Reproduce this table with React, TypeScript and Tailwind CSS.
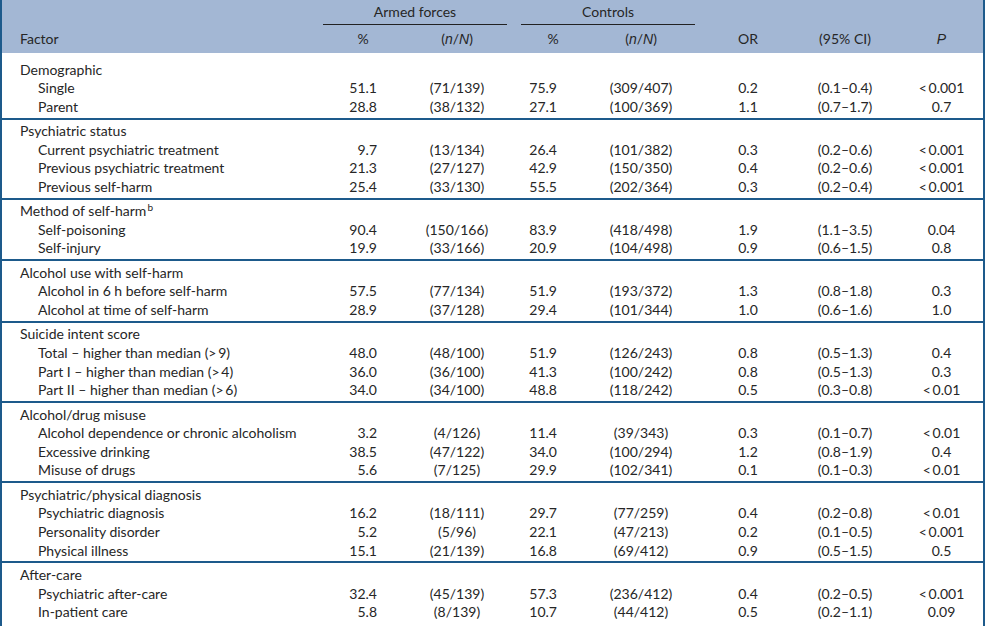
import React from 'react';

type Row = [string, string, string, string, string, string, string, string];
type Section = { title: string; sup?: string; rows: Row[] };

const sections: Section[] = [
  {
    title: 'Demographic',
    rows: [
      ['Single', '51.1', '(71/139)', '75.9', '(309/407)', '0.2', '(0.1–0.4)', '<\u20090.001'],
      ['Parent', '28.8', '(38/132)', '27.1', '(100/369)', '1.1', '(0.7–1.7)', '0.7'],
    ],
  },
  {
    title: 'Psychiatric status',
    rows: [
      ['Current psychiatric treatment', '9.7', '(13/134)', '26.4', '(101/382)', '0.3', '(0.2–0.6)', '<\u20090.001'],
      ['Previous psychiatric treatment', '21.3', '(27/127)', '42.9', '(150/350)', '0.4', '(0.2–0.6)', '<\u20090.001'],
      ['Previous self-harm', '25.4', '(33/130)', '55.5', '(202/364)', '0.3', '(0.2–0.4)', '<\u20090.001'],
    ],
  },
  {
    title: 'Method of self-harm',
    sup: 'b',
    rows: [
      ['Self-poisoning', '90.4', '(150/166)', '83.9', '(418/498)', '1.9', '(1.1–3.5)', '0.04'],
      ['Self-injury', '19.9', '(33/166)', '20.9', '(104/498)', '0.9', '(0.6–1.5)', '0.8'],
    ],
  },
  {
    title: 'Alcohol use with self-harm',
    rows: [
      ['Alcohol in 6 h before self-harm', '57.5', '(77/134)', '51.9', '(193/372)', '1.3', '(0.8–1.8)', '0.3'],
      ['Alcohol at time of self-harm', '28.9', '(37/128)', '29.4', '(101/344)', '1.0', '(0.6–1.6)', '1.0'],
    ],
  },
  {
    title: 'Suicide intent score',
    rows: [
      ['Total – higher than median (>\u20099)', '48.0', '(48/100)', '51.9', '(126/243)', '0.8', '(0.5–1.3)', '0.4'],
      ['Part I – higher than median (>\u20094)', '36.0', '(36/100)', '41.3', '(100/242)', '0.8', '(0.5–1.3)', '0.3'],
      ['Part II – higher than median (>\u20096)', '34.0', '(34/100)', '48.8', '(118/242)', '0.5', '(0.3–0.8)', '<\u20090.01'],
    ],
  },
  {
    title: 'Alcohol/drug misuse',
    rows: [
      ['Alcohol dependence or chronic alcoholism', '3.2', '(4/126)', '11.4', '(39/343)', '0.3', '(0.1–0.7)', '<\u20090.01'],
      ['Excessive drinking', '38.5', '(47/122)', '34.0', '(100/294)', '1.2', '(0.8–1.9)', '0.4'],
      ['Misuse of drugs', '5.6', '(7/125)', '29.9', '(102/341)', '0.1', '(0.1–0.3)', '<\u20090.01'],
    ],
  },
  {
    title: 'Psychiatric/physical diagnosis',
    rows: [
      ['Psychiatric diagnosis', '16.2', '(18/111)', '29.7', '(77/259)', '0.4', '(0.2–0.8)', '<\u20090.01'],
      ['Personality disorder', '5.2', '(5/96)', '22.1', '(47/213)', '0.2', '(0.1–0.5)', '<\u20090.001'],
      ['Physical illness', '15.1', '(21/139)', '16.8', '(69/412)', '0.9', '(0.5–1.5)', '0.5'],
    ],
  },
  {
    title: 'After-care',
    rows: [
      ['Psychiatric after-care', '32.4', '(45/139)', '57.3', '(236/412)', '0.4', '(0.2–0.5)', '<\u20090.001'],
      ['In-patient care', '5.8', '(8/139)', '10.7', '(44/412)', '0.5', '(0.2–1.1)', '0.09'],
    ],
  },
];

const grid = 'grid grid-cols-[321px_80px_108px_84px_92px_122px_72px_102px]';

function It({ children }: { children: React.ReactNode }) {
  return (
    <span className="italic" style={{ fontFamily: '"Liberation Sans", sans-serif' }}>
      {children}
    </span>
  );
}

function DataRow({ r }: { r: Row }) {
  return (
    <div className={`${grid} h-[18.6px] leading-[18.6px] whitespace-nowrap`}>
      <div className="pl-[36px]">{r[0]}</div>
      <div className="text-right pr-[26px]">{r[1]}</div>
      <div className="text-center">{r[2]}</div>
      <div className="text-right pr-[38px]">{r[3]}</div>
      <div className="text-center">{r[4]}</div>
      <div className="text-center">{r[5]}</div>
      <div className="text-center">{r[6]}</div>
      <div className="text-center pl-[19px]">{r[7]}</div>
    </div>
  );
}

export default function App() {
  return (
    <div
      className="w-[985px] h-[626px] overflow-hidden bg-white border-x-2 border-[#1d5a8b] text-[14px] text-[#262626]"
      style={{ fontFamily: 'Lato, "Liberation Sans", sans-serif' }}
    >
      <div className="bg-[#a3b7d4] h-[53px]">
        <div className={`${grid} h-[25px]`}>
          <div />
          <div className="col-span-2 mr-[4px] h-[25px] leading-[24px] text-center border-b border-[#222]">Armed forces</div>
          <div className="col-span-2 ml-[10px] mr-[-8px] h-[25px] leading-[24px] text-center border-b border-[#222]">Controls</div>
          <div />
          <div />
          <div />
        </div>
        <div className={`${grid} h-[28px] leading-[28px]`}>
          <div className="pl-[18px]">Factor</div>
          <div className="text-center">%</div>
          <div className="text-center">
            (<It>n</It>/<It>N</It>)
          </div>
          <div className="text-center">%</div>
          <div className="text-center">
            (<It>n</It>/<It>N</It>)
          </div>
          <div className="text-center">OR</div>
          <div className="text-center">(95% CI)</div>
          <div className="text-center pl-[19px]">
            <It>P</It>
          </div>
        </div>
      </div>
      {sections.map((s, i) => (
        <div
          key={s.title}
          className={i === 0 ? 'pt-[7.5px] pb-[1.3px]' : 'border-t-2 border-[#1d5a8b] pt-[2.5px] pb-[1.3px]'}
        >
          <div className="h-[18.6px] leading-[18.6px] pl-[18px] whitespace-nowrap">
            {s.title}
            {s.sup && <span className="text-[10px] relative -top-[5px] ml-[1px]">{s.sup}</span>}
          </div>
          {s.rows.map((r) => (
            <DataRow key={r[0]} r={r} />
          ))}
        </div>
      ))}
    </div>
  );
}
